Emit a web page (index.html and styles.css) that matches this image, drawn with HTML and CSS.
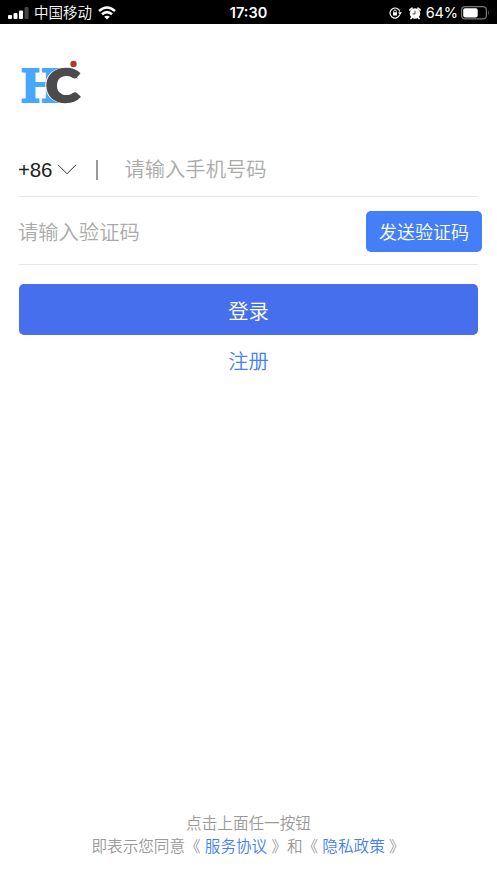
FILE: index.html
```html
<!DOCTYPE html>
<html lang="zh-CN">
<head>
<meta charset="utf-8">
<title>登录</title>
<link rel="stylesheet" href="styles.css">
</head>
<body>
<header class="status">
  <div class="side">
    <svg class="signal" width="21" height="13" viewBox="0 0 21 13" fill="#fff"><rect x="0" y="8" width="4" height="4" rx="1"/><rect x="5.5" y="6" width="4" height="6" rx="1"/><rect x="11" y="3.5" width="4" height="8.500" rx="1"/><rect x="16.500" y="0" width="4" height="12" rx="1" fill="#444"/></svg>
    <span class="carrier">中国移动</span>
    <svg class="wifi" width="18" height="14" viewBox="0 0 18 14" fill="none" stroke="#fff" stroke-width="2.500"><path d="M1 5Q9-2 17 5M4 8.300Q9 4 14 8.300"/><path d="M9 13.500L6.200 10.700Q9 8.600 11.800 10.700Z" fill="#fff" stroke="none"/></svg>
  </div>
  <time class="clock">17:30</time>
  <div class="side side-end">
    <svg class="lock" width="13" height="12" viewBox="0 0 13 12" fill="none" stroke="#fff" stroke-width="1.200"><path d="M10.700 7.800A5 5 0 1 1 10.800 4.500"/><path d="M9 5.300h4L11 8z" fill="#fff" stroke="none"/><rect x="4" y="5.300" width="4" height="3.200" fill="#fff" stroke="none"/><path d="M4.700 5.500V4.300a1.300 1.300 0 0 1 2.600 0v1.200" stroke-width=".9"/></svg>
    <svg class="alarm" width="12" height="13" viewBox="0 0 12 13"><circle cx="6" cy="6.500" r="5.200" fill="#fff"/><path d="M.9 3L3 1.200M11.100 3L9 1.200M2.500 10.800L2 11.500M9.500 10.800l.5 .7" stroke="#fff" stroke-width="1.700" stroke-linecap="round"/><path d="M6 3.700V7H3.500" fill="none" stroke="#222" stroke-width=".8"/></svg>
    <span class="percent">64%</span>
    <svg class="battery" width="29" height="14" viewBox="0 0 29 14"><rect x=".6" y=".6" width="24.800" height="12.300" rx="3.500" fill="none" stroke="#777" stroke-width="1.200"/><rect x="2.200" y="2.200" width="14.500" height="9.200" rx="1.800" fill="#fff"/><path d="M27 4.500q1.600 2.200 0 4.500z" fill="#777"/></svg>
  </div>
</header>
<main class="login">
  <svg class="logo" width="62" height="48" viewBox="0 0 62 48">
    <text class="logo-h" x="-.5" y="42.800" textLength="40" lengthAdjust="spacingAndGlyphs">H</text>
    <path d="M50 12.500L54.500 11L57 20Z" fill="#47a7fb"/>
    <text class="logo-c" x="25" y="42.700" textLength="33.500" lengthAdjust="spacingAndGlyphs"><tspan>C</tspan></text>
    <circle cx="52.500" cy="5" r="3.200" fill="#b4382f"/>
  </svg>
  <div class="row phone">
    <span class="code">+86</span>
    <svg class="chevron" width="20" height="11" viewBox="0 0 20 11" fill="none" stroke="#333"><path d="M1 .8L10 9.800L19 .8"/></svg>
    <span class="divider"></span>
    <span class="hint">请输入手机号码</span>
  </div>
  <div class="row verify">
    <span class="hint">请输入验证码</span>
    <button class="send">发送验证码</button>
  </div>
  <button class="submit">登录</button>
  <a class="register">注册</a>
</main>
<footer class="terms">
  <div>点击上面任一按钮</div>
  <div class="agreement"><span>即表示您同意《</span><a>服务协议</a><span>》和《</span><a>隐私政策</a><span>》</span></div>
</footer>
</body>
</html>
```
FILE: styles.css
```css
* { box-sizing: border-box; }
body {
  margin: 0;
  height: 883px;
  display: flex;
  flex-direction: column;
  overflow: hidden;
  background: #fff;
  font-family: "Liberation Sans", "Noto Sans CJK SC", sans-serif;
  font-weight: 350;
}
svg { display: block; flex: none; }
button { border: 0; padding: 0; color: #fff; font: inherit; }
.status {
  height: 24px;
  flex: none;
  display: grid;
  grid-template-columns: 1fr auto 1fr;
  align-items: center;
  padding: 0 7px 0 8px;
  background: #000;
  color: #fff;
}
.side { display: flex; align-items: center; height: 24px; padding-top: 1px; }
.side-end { justify-content: flex-end; }
.carrier { margin: 0 6px 0 5px; font-size: 14.5px; line-height: 22px; }
.clock { font: 600 14.500px/24px Inter, sans-serif; padding: 1px 1px 0 0; }
.alarm { margin: 0 5px 0 7px; }
.percent { font: 400 14.500px/22px Inter, sans-serif; letter-spacing: -.1px; margin-right: 3px; }
.login { flex: 1; display: flex; flex-direction: column; padding: 35px 19px 0; }
.logo { margin-left: 2px; overflow: visible; }
.logo-h { font: 700 44px "DejaVu Serif", serif; fill: #47a7fb; stroke: #47a7fb; stroke-width: 1.800px; }
.logo-c { font: 900 45px Lato, sans-serif; fill: #4b4b4d; stroke: #4b4b4d; stroke-width: 2.500px; filter: drop-shadow(-1px 0 0 #fff) drop-shadow(1px 0 0 #fff); }
.row { display: flex; align-items: center; border-bottom: 1px solid #e6e6e6; }
.hint { font-size: 20.300px; line-height: 30px; color: #aaa; }
.phone { height: 54px; margin-top: 36px; }
.phone .hint { padding-top: 1px; }
.code { width: 35px; margin-left: -1px; font-size: 20.500px; letter-spacing: -.2px; color: #222; }
.chevron { margin-left: 4px; }
.divider { width: 1.500px; height: 20px; margin: 0 27px 0 19px; background: #999; }
.verify { height: 68px; justify-content: space-between; }
.verify .hint { margin-left: -1px; padding-top: 4px; }
.send { width: 116px; height: 41px; margin: 1px -4px 0 0; border-radius: 5px; background: #447ff7; font-size: 18px; }
.submit { height: 51px; flex: none; margin-top: 19px; border-radius: 5px; background: #456fec; font-size: 20.300px; }
.register { align-self: center; margin-top: 12px; font-size: 20.300px; line-height: 30px; color: #447ff7; }
.terms { height: 71px; text-align: center; font-size: 15.600px; line-height: 23px; color: #999; }
.agreement { display: flex; justify-content: center; padding-right: 1px; }
.agreement a { margin: 0 4.200px; color: #447ff7; }
```
